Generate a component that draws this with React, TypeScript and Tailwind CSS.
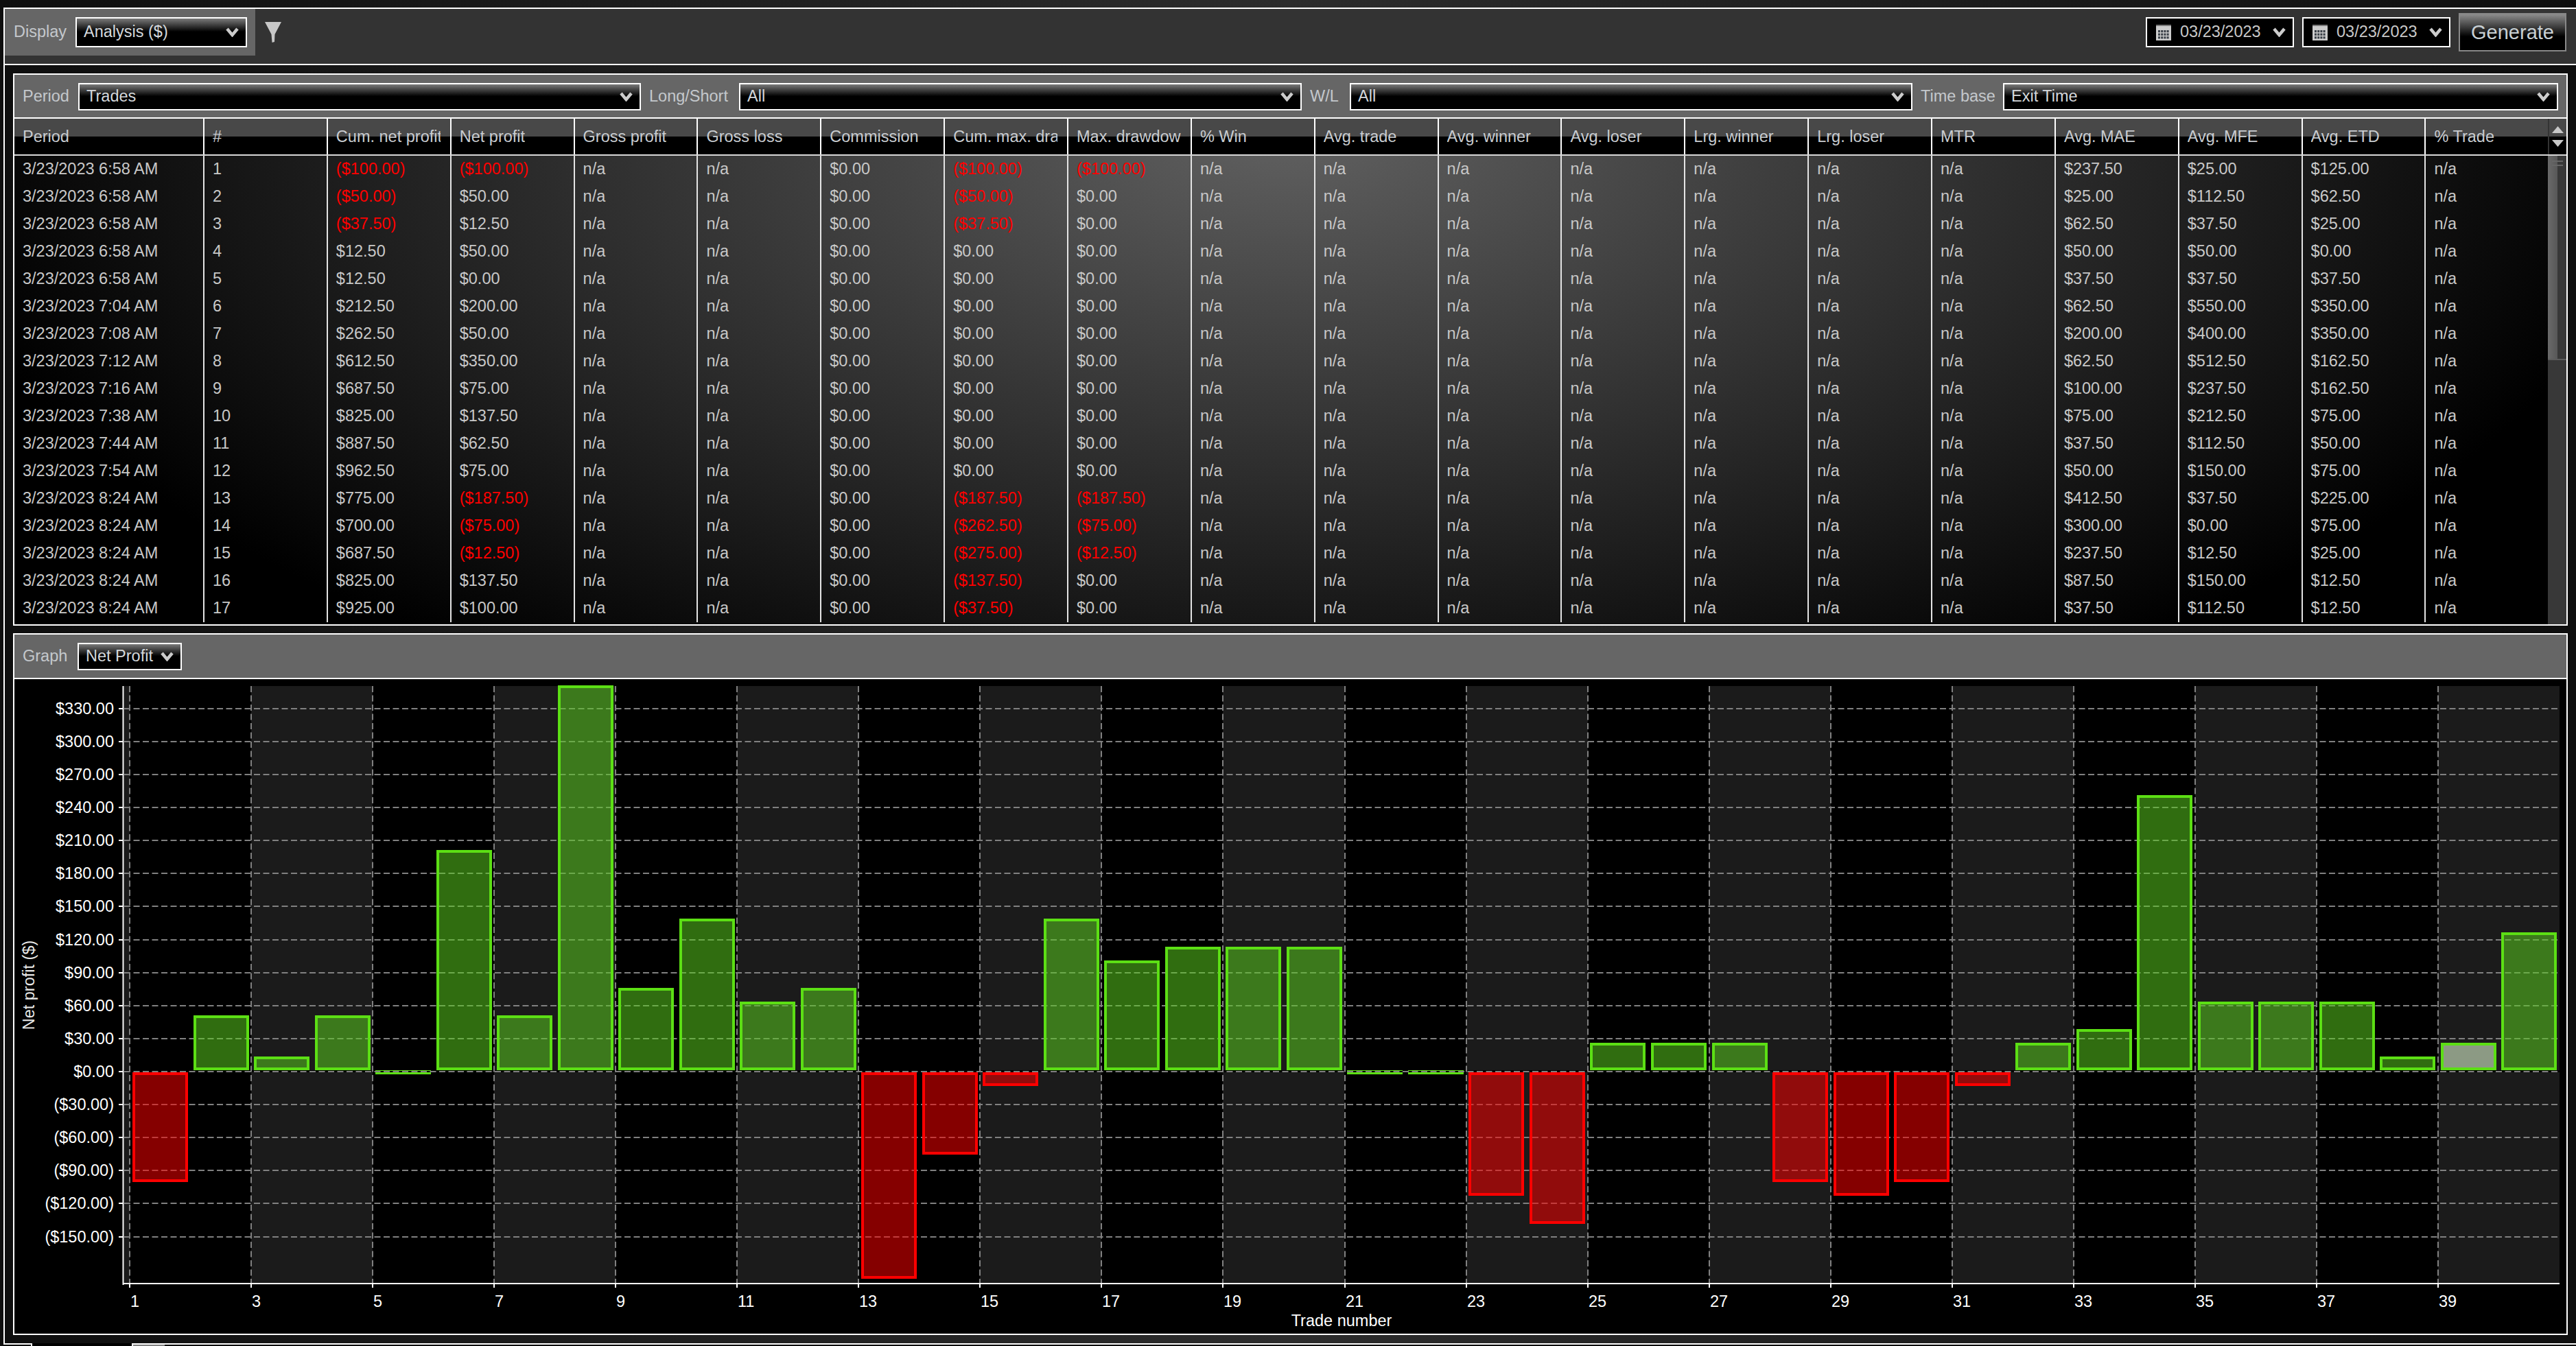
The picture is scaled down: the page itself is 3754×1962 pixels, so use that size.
const COLUMNS = [
  "Period", "#", "Cum. net profit", "Net profit", "Gross profit", "Gross loss", "Commission",
  "Cum. max. drawdown", "Max. drawdown", "% Win", "Avg. trade", "Avg. winner", "Avg. loser",
  "Lrg. winner", "Lrg. loser", "MTR", "Avg. MAE", "Avg. MFE", "Avg. ETD", "% Trade",
];

// time, cum net, net, cum max dd, max dd, mae, mfe, etd
const TRADES = [
  ["6:58", "($100.00)", "($100.00)", "($100.00)", "($100.00)", "$237.50", "$25.00", "$125.00"],
  ["6:58", "($50.00)", "$50.00", "($50.00)", "$0.00", "$25.00", "$112.50", "$62.50"],
  ["6:58", "($37.50)", "$12.50", "($37.50)", "$0.00", "$62.50", "$37.50", "$25.00"],
  ["6:58", "$12.50", "$50.00", "$0.00", "$0.00", "$50.00", "$50.00", "$0.00"],
  ["6:58", "$12.50", "$0.00", "$0.00", "$0.00", "$37.50", "$37.50", "$37.50"],
  ["7:04", "$212.50", "$200.00", "$0.00", "$0.00", "$62.50", "$550.00", "$350.00"],
  ["7:08", "$262.50", "$50.00", "$0.00", "$0.00", "$200.00", "$400.00", "$350.00"],
  ["7:12", "$612.50", "$350.00", "$0.00", "$0.00", "$62.50", "$512.50", "$162.50"],
  ["7:16", "$687.50", "$75.00", "$0.00", "$0.00", "$100.00", "$237.50", "$162.50"],
  ["7:38", "$825.00", "$137.50", "$0.00", "$0.00", "$75.00", "$212.50", "$75.00"],
  ["7:44", "$887.50", "$62.50", "$0.00", "$0.00", "$37.50", "$112.50", "$50.00"],
  ["7:54", "$962.50", "$75.00", "$0.00", "$0.00", "$50.00", "$150.00", "$75.00"],
  ["8:24", "$775.00", "($187.50)", "($187.50)", "($187.50)", "$412.50", "$37.50", "$225.00"],
  ["8:24", "$700.00", "($75.00)", "($262.50)", "($75.00)", "$300.00", "$0.00", "$75.00"],
  ["8:24", "$687.50", "($12.50)", "($275.00)", "($12.50)", "$237.50", "$12.50", "$25.00"],
  ["8:24", "$825.00", "$137.50", "($137.50)", "$0.00", "$87.50", "$150.00", "$12.50"],
  ["8:24", "$925.00", "$100.00", "($37.50)", "$0.00", "$37.50", "$112.50", "$12.50"],
];

const NET_PROFIT = [
  -100, 50, 12.5, 50, 0, 200, 50, 350, 75, 137.5, 62.5, 75, -187.5, -75, -12.5, 137.5, 100, 112.5, 112.5, 112.5,
  0, 0, -112.5, -137.5, 25, 25, 25, -100, -112.5, -100, -12.5, 25, 37.5, 250, 62.5, 62.5, 62.5, 12.5, 25, 125,
];

const COL_GRID = "grid grid-cols-[277px_repeat(18,179.86px)_177.5px]";

function Chevron() {
  return (
    <svg width="19" height="14" viewBox="0 0 19 14" className="shrink-0">
      <polyline points="2,2 9.5,11 17,2" fill="none" stroke="#cccccc" strokeWidth="4.5" />
    </svg>
  );
}

function Select({ label, className }: { label: string; className: string }) {
  return (
    <div
      className={`flex items-center justify-between border-2 border-white bg-[linear-gradient(#7a7a7a,#000_48%)] pl-[10px] pr-[10px] text-[#d4d8dc] ${className}`}
    >
      <span className="whitespace-nowrap">{label}</span>
      <Chevron />
    </div>
  );
}

function CalendarIcon() {
  const cells = [];
  for (let r = 0; r < 3; r++) {
    for (let c = 0; c < 4; c++) {
      cells.push(<rect key={`${r}-${c}`} x={3 + c * 4.2} y={8 + r * 4.6} width="3" height="3.2" fill="#3a4048" />);
    }
  }
  return (
    <svg width="22" height="23" viewBox="0 0 22 23" className="shrink-0">
      <rect width="22" height="23" fill="#cccccc" />
      <rect width="22" height="2" fill="#777777" />
      {cells}
    </svg>
  );
}

function DateBox({ className }: { className: string }) {
  return (
    <div className={`flex h-[44px] items-center border-2 border-white bg-black pl-[13px] pr-[10px] text-[#c8c8c8] ${className}`}>
      <CalendarIcon />
      <span className="ml-[13px] flex-1 whitespace-nowrap">03/23/2023</span>
      <Chevron />
    </div>
  );
}

function Toolbar() {
  return (
    <div className="flex h-[84px] items-start justify-between border-y-2 border-l-2 border-white bg-[#333333]">
      <div className="flex items-start">
        <div className="flex h-[68px] w-[365px] items-center bg-[#666666] pl-[13px] text-[#c4c8cc]">
          <span className="w-[90px]">Display</span>
          <Select label="Analysis ($)" className="h-[44px] w-[250px]" />
        </div>
        <svg width="26" height="32" viewBox="0 0 26 32" className="ml-[13px] mt-[18px]">
          <polygon points="1,1 25,1 15.5,19 15,30 11.5,31 10.5,19" fill="#c8c8c8" />
        </svg>
      </div>
      <div className="flex items-start pr-[14px]">
        <DateBox className="mt-[12px] w-[216px]" />
        <DateBox className="ml-[12px] mt-[12px] w-[216px]" />
        <div className="ml-[12px] mt-[6px] flex h-[56px] w-[157px] items-center justify-center border-2 border-[#888888] bg-[linear-gradient(#8c8c8c,#000_62%)] text-[29px] text-[#c8d0d4]">
          Generate
        </div>
      </div>
    </div>
  );
}

function FilterBar() {
  return (
    <div className="flex h-[64px] items-center border-b-2 border-white bg-[#666666] pl-[12px] pt-[2px] text-[#c4c8cc]">
      <span className="w-[81px]">Period</span>
      <Select label="Trades" className="h-[40px] w-[820px]" />
      <span className="ml-[12px] w-[131px] whitespace-nowrap">Long/Short</span>
      <Select label="All" className="h-[40px] w-[820px]" />
      <span className="ml-[12px] w-[58px]">W/L</span>
      <Select label="All" className="h-[40px] w-[820px]" />
      <span className="ml-[12px] w-[120px] whitespace-nowrap">Time base</span>
      <Select label="Exit Time" className="h-[40px] w-[809px]" />
    </div>
  );
}

function Cell({ text, last, red }: { text: string; last: boolean; red?: boolean }) {
  return (
    <div className={`h-full pl-[12px] pr-[12px] ${last ? "" : "border-r-2 border-[#e4e4e4]"}`}>
      <div className={`overflow-hidden whitespace-nowrap ${red ? "text-[#ff0000]" : ""}`}>{text}</div>
    </div>
  );
}

function DataTable() {
  return (
    <div className="h-[805px] overflow-hidden border-2 border-white">
      <FilterBar />
      <div className="flex h-[54px] border-b-2 border-[#d8d8d8] bg-[linear-gradient(#484848_50%,#000_50%)] text-[#c8ccd0]">
        <div className={`${COL_GRID} h-[52px] items-center`}>
          {COLUMNS.map((c, i) => (
            <div key={c} className={`flex h-full items-center pl-[12px] pr-[14px] ${i === COLUMNS.length - 1 ? "" : "border-r-2 border-white"}`}>
              <div className="overflow-hidden whitespace-nowrap leading-[28px]">{c}</div>
            </div>
          ))}
        </div>
        <div className="flex w-[27px] flex-col items-center justify-center gap-[10px] border-l-2 border-[#333333]">
          <svg width="17" height="10" viewBox="0 0 17 10"><polygon points="8.5,0 17,10 0,10" fill="#c8c8c8" /></svg>
          <svg width="17" height="10" viewBox="0 0 17 10"><polygon points="0,0 17,0 8.5,10" fill="#c8c8c8" /></svg>
        </div>
      </div>
      <div className="flex h-[683px] bg-[radial-gradient(ellipse_2000px_930px_at_1856px_-30px,#606060_0%,#000000_100%)] text-[#c8c8c8]">
        <div>
          {TRADES.map((t, i) => {
            const values = [
              `3/23/2023 ${t[0]} AM`, String(i + 1), t[1], t[2], "n/a", "n/a", "$0.00", t[3], t[4],
              "n/a", "n/a", "n/a", "n/a", "n/a", "n/a", "n/a", t[5], t[6], t[7], "n/a",
            ];
            return (
              <div key={i} className={`${COL_GRID} h-[40px] items-stretch leading-[39px]`}>
                {values.map((v, j) => (
                  <Cell key={j} text={v} last={j === values.length - 1} red={v.startsWith("(")} />
                ))}
              </div>
            );
          })}
        </div>
        <div className="flex w-[27px] flex-col bg-[#383838]">
          <div className="relative h-[298px] border-b-2 border-[#5c5c5c] bg-[linear-gradient(90deg,#6a6a6a_0%,#585858_50%,#383838_50%)]">
            <div className="absolute left-[6px] top-[7px] h-[2px] w-[16px] bg-[#666666]" />
            <div className="absolute left-[6px] top-[13px] h-[2px] w-[16px] bg-[#666666]" />
          </div>
        </div>
      </div>
    </div>
  );
}

const PLOT_LEFT = 181;
const PLOT_RIGHT = 3730;
const PLOT_TOP = 1000;
const PLOT_BOTTOM = 1870;
const FIRST_X = 189;
const TRADE_W = 88.52;
const ZERO_Y = 1562;
const PX_PER_DOLLAR = 1.604;
const Y_TICKS = [330, 300, 270, 240, 210, 180, 150, 120, 90, 60, 30, 0, -30, -60, -90, -120, -150];

function money(v: number) {
  return v < 0 ? `($${(-v).toFixed(2)})` : `$${v.toFixed(2)}`;
}

function Bar({ value, index }: { value: number; index: number }) {
  const x = Math.round(FIRST_X + index * TRADE_W + 4);
  const w = 81;
  const sw = 4;
  if (value === 0) {
    return (
      <g fill="#5cdf14">
        <rect x={x} y={1560} width={w} height={1} />
        <rect x={x} y={1563} width={w} height={3} />
      </g>
    );
  }
  const h = Math.round(Math.abs(value) * PX_PER_DOLLAR);
  const y = value > 0 ? 1560 - h : 1563;
  const selected = index === 38;
  const stroke = value > 0 ? "#5cdf14" : "#ff0000";
  const fill = selected ? "#8c9a84" : value > 0 ? "rgba(90,205,30,0.53)" : "rgba(255,0,0,0.52)";
  return (
    <rect x={x + sw / 2} y={y + sw / 2} width={w - sw} height={h - sw} fill={fill} stroke={stroke} strokeWidth={sw} />
  );
}

function Chart() {
  const lines = Array.from({ length: 20 }, (_, i) => Math.round(FIRST_X + i * 177.05));
  return (
    <svg viewBox="21 990 3719 954" className="block h-[954px] w-[3719px]" fontFamily="'Liberation Sans', Arial, sans-serif" fontSize="23.5">
      <rect x={PLOT_LEFT} y={PLOT_TOP} width={FIRST_X - PLOT_LEFT} height={PLOT_BOTTOM - PLOT_TOP} fill="#1b1b1b" />
      {lines.map((x, i) =>
        i % 2 === 1 ? <rect key={x} x={x} y={PLOT_TOP} width={177} height={PLOT_BOTTOM - PLOT_TOP} fill="#1b1b1b" /> : null
      )}
      <rect x={PLOT_LEFT} y={1560} width={PLOT_RIGHT - PLOT_LEFT} height={3} fill="#000000" />
      {lines.map((x) => (
        <line key={x} x1={x} x2={x} y1={PLOT_TOP} y2={PLOT_BOTTOM} stroke="#808080" strokeWidth="2" strokeDasharray="9 4.5" />
      ))}
      {Y_TICKS.map((v) => {
        const y = Math.round(ZERO_Y - v * PX_PER_DOLLAR);
        return (
          <g key={v}>
            <line x1={PLOT_LEFT} x2={PLOT_RIGHT} y1={y} y2={y} stroke="#808080" strokeWidth="2" strokeDasharray="9 4.5" />
            <line x1={173} x2={179} y1={y} y2={y} stroke="#ffffff" strokeWidth="2" />
            <text x={166} y={y + 8} textAnchor="end" fill="#ffffff">{money(v)}</text>
          </g>
        );
      })}
      {NET_PROFIT.map((v, i) => (
        <Bar key={i} value={v} index={i} />
      ))}
      <rect x={178.5} y={PLOT_TOP} width={2} height={873} fill="#ffffff" />
      <rect x={PLOT_LEFT - 2} y={1870} width={PLOT_RIGHT - PLOT_LEFT + 2} height={2} fill="#ffffff" />
      {lines.map((x, i) => (
        <g key={x}>
          <line x1={x} x2={x} y1={1872} y2={1877} stroke="#ffffff" strokeWidth="2" />
          <text x={x + 1} y={1905} fill="#ffffff">{i * 2 + 1}</text>
        </g>
      ))}
      <text x={1955} y={1933} textAnchor="middle" fill="#ffffff">Trade number</text>
      <text transform="translate(50 1436) rotate(-90)" textAnchor="middle" fill="#e8e8e8">Net profit ($)</text>
    </svg>
  );
}

function GraphPanel() {
  return (
    <div className="mt-[11px] h-[1023px] overflow-hidden border-2 border-white bg-black">
      <div className="flex h-[65px] items-center border-b-2 border-white bg-[#666666] pl-[12px] text-[#c4c8cc]">
        <span className="w-[80px]">Graph</span>
        <Select label="Net Profit" className="h-[40px] w-[152px]" />
      </div>
      <Chart />
    </div>
  );
}

export default function App() {
  return (
    <div className="h-[1962px] w-[3754px] overflow-hidden bg-[linear-gradient(90deg,#0e0e0e,#2c2c2c_50%,#0e0e0e)] pl-[5px] pt-[11px] font-['Liberation_Sans',Arial,sans-serif] text-[23.5px] leading-none">
      <Toolbar />
      <div className="h-[1863px] border-l-2 border-white pl-[12px] pt-[12px] pr-[12px]">
        <div className="w-[3723px]">
          <DataTable />
          <GraphPanel />
        </div>
      </div>
      <div className="flex h-[4px] bg-black">
        <div className="w-[42px] border-r-2 border-t-2 border-white" />
        <div className="w-[145px]" />
        <div className="flex-1 border-l-2 border-t-2 border-white">
          <div className="h-[2px] w-[46px] bg-[#808080]" />
        </div>
      </div>
    </div>
  );
}
